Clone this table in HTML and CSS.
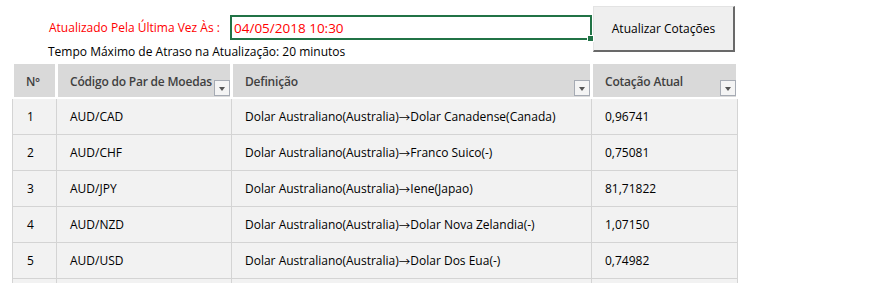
FILE: index.html
```html
<!DOCTYPE html>
<html lang="pt">
<head>
<meta charset="utf-8">
<link rel="stylesheet" href="styles.css">
</head>
<body>
<div class="top">
  <div class="left">
    <div class="stamp-row">
      <span class="stamp-label">Atualizado Pela Última Vez Às :</span>
      <div class="stamp-box"><span>04/05/2018 10:30</span><i class="handle"></i></div>
    </div>
    <div class="delay">Tempo Máximo de Atraso na Atualização: 20 minutos</div>
  </div>
  <button class="refresh">Atualizar Cotações</button>
</div>
<div class="table">
  <div class="th c1">Nº</div>
  <div class="th">Código do Par de Moedas<span class="dd"></span></div>
  <div class="th">Definição<span class="dd"></span></div>
  <div class="th">Cotação Atual<span class="dd"></span></div>

  <div class="td c1">1</div><div class="td">AUD/CAD</div><div class="td">Dolar Australiano(Australia)<span class="arr">→</span>Dolar Canadense(Canada)</div><div class="td">0,96741</div>
  <div class="td c1">2</div><div class="td">AUD/CHF</div><div class="td">Dolar Australiano(Australia)<span class="arr">→</span>Franco Suico(-)</div><div class="td">0,75081</div>
  <div class="td c1">3</div><div class="td">AUD/JPY</div><div class="td">Dolar Australiano(Australia)<span class="arr">→</span>Iene(Japao)</div><div class="td">81,71822</div>
  <div class="td c1">4</div><div class="td">AUD/NZD</div><div class="td">Dolar Australiano(Australia)<span class="arr">→</span>Dolar Nova Zelandia(-)</div><div class="td">1,07150</div>
  <div class="td c1">5</div><div class="td">AUD/USD</div><div class="td">Dolar Australiano(Australia)<span class="arr">→</span>Dolar Dos Eua(-)</div><div class="td">0,74982</div>
  <div class="td c1"></div><div class="td"></div><div class="td"></div><div class="td"></div>
</div>
</body>
</html>
```
FILE: styles.css
```css
html, body {
  margin: 0;
  padding: 0;
  background: #ffffff;
  font-family: "Open Sans", "Noto Sans", sans-serif;
  font-size: 12px;
  color: #000;
  overflow: hidden;
}
.top {
  display: flex;
  align-items: flex-start;
  height: 58px;
  padding: 6px 0 0 48px;
}
.left {
  display: flex;
  flex-direction: column;
  padding-top: 9px;
}
.stamp-row {
  display: flex;
  align-items: center;
}
.stamp-label {
  color: #ff0000;
  width: 182px;
  padding-left: 1px;
  box-sizing: border-box;
}
.stamp-box {
  position: relative;
  width: 362px;
  height: 25px;
  box-sizing: border-box;
  border: 2px solid #217346;
  color: #ff0000;
  display: flex;
  align-items: center;
  padding-left: 2px;
  font-size: 13.5px;
}
.handle {
  position: absolute;
  right: -4px;
  bottom: -4px;
  width: 5px;
  height: 5px;
  background: #217346;
  border: 1px solid #fff;
}
.delay {
  margin-top: 4px;
  line-height: 16px;
}
.refresh {
  margin-left: 1px;
  width: 142px;
  height: 46px;
  background: #efefef;
  border: none;
  border-right: 2px solid #696969;
  border-bottom: 2px solid #696969;
  border-top: 1px solid #e3e3e3;
  border-left: 1px solid #e3e3e3;
  font-family: inherit;
  font-size: 12px;
  color: #000;
  padding: 0;
}
.table {
  margin-left: 12px;
  display: grid;
  grid-template-columns: 45px 175px 360px 146px;
  width: 726px;
}
.th {
  position: relative;
  margin: 0 2px 2px 1px;
  height: 33px;
  background: #d9d9d9;
  color: #404040;
  font-weight: 600;
  letter-spacing: -0.2px;
  display: flex;
  align-items: center;
  padding-left: 12px;
  padding-top: 1px;
  box-sizing: border-box;
}
.th.c1 {
  margin-left: 2px;
}
.dd {
  position: absolute;
  right: 0;
  bottom: 1px;
  width: 16px;
  height: 16px;
  box-sizing: border-box;
  border: 1px solid #a6abb4;
  background: #f4f4f4;
}
.dd::after {
  content: "";
  position: absolute;
  left: 4px;
  top: 6px;
  border-left: 3.5px solid transparent;
  border-right: 3.5px solid transparent;
  border-top: 4px solid #555;
}
.td {
  height: 36px;
  box-sizing: border-box;
  background: #f2f2f2;
  border-right: 1px solid #d4d4d4;
  border-bottom: 1px solid #d4d4d4;
  display: flex;
  align-items: center;
  padding-left: 13px;
  white-space: nowrap;
}
.td.c1 {
  border-left: 1px solid #d4d4d4;
  padding-left: 14px;
}
.arr {
  font-family: "Noto Sans CJK JP", sans-serif;
  font-size: 11.5px;
}
```
